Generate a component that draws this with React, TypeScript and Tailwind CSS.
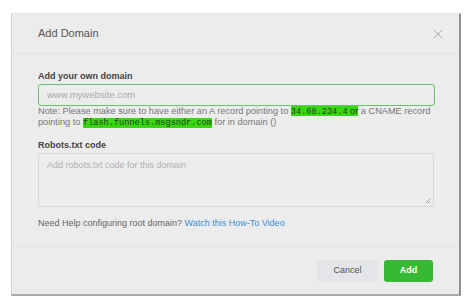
import React from "react";

export default function App() {
  return (
    <div className="w-[472px] h-[306px] bg-white pl-[11px] pt-[13px]" style={{ fontFamily: '"Liberation Sans", Arial, sans-serif' }}>
      <div className="w-[450px] h-[283px] bg-[#ececec] border-l border-l-[#d4d4d4] border-r-[2px] border-r-[#8f8f8f] border-b-[2px] border-b-[#a9a9a9] border-t border-t-[#e4e4e4] flex flex-col">
        <div className="h-[40px] shrink-0 flex items-center justify-between pl-[26px] pr-[14px] border-b border-b-[#e2e2e2]">
          <span className="text-[11px] text-[#555]">Add Domain</span>
          <svg width="10" height="10" viewBox="0 0 10 10" className="mr-[2px]">
            <path d="M1 1 L9 9 M9 1 L1 9" stroke="#aaa" strokeWidth="1" />
          </svg>
        </div>
        <div className="flex-1 pl-[26px] pr-[26px] pt-[16px]">
          <div className="text-[9px] font-bold text-[#444] leading-[12px]">Add your own domain</div>
          <div className="mt-[2px] h-[22px] w-[397px] rounded-[3px] border-[1.5px] border-[#6cc36c] flex items-center pl-[8px] text-[9.5px] text-[#aaa]">
            www.mywebsite.com
          </div>
          <div className="text-[9.2px] leading-[10px] text-[#777] w-[400px]">
            Note: Please make sure to have either an A record pointing to{" "}
            <span className="bg-[#36d80e] text-[#2d3a2d]">
              <span className="text-[8.6px]" style={{ fontFamily: '"Liberation Mono", monospace' }}>34.68.234.4</span> or
            </span>{" "}
            a CNAME record pointing to{" "}
            <span className="bg-[#36d80e] text-[#2d3a2d] text-[8.6px]" style={{ fontFamily: '"Liberation Mono", monospace' }}>
              flash.funnels.msgsndr.com
            </span>{" "}
            for in domain ()
          </div>
          <div className="mt-[11px] text-[9px] font-bold text-[#444] leading-[12px]">Robots.txt code</div>
          <div className="relative mt-[2px] h-[54px] w-[396px] rounded-[3px] border border-[#d8d8d8] pl-[8px] pt-[5px] text-[9px] text-[#b0b0b0]">
            Add robots.txt code for this domain
            <svg width="6" height="6" viewBox="0 0 6 6" className="absolute right-[2px] bottom-[2px]">
              <path d="M5 1 L1 5 M5 3 L3 5" stroke="#999" strokeWidth="0.8" />
            </svg>
          </div>
          <div className="mt-[10px] text-[9px] leading-[12px] text-[#666]">
            Need Help configuring root domain? <span className="text-[#3a8fd6]">Watch this How-To Video</span>
          </div>
        </div>
        <div className="h-[48px] shrink-0 border-t border-t-[#e2e2e2] flex items-start justify-end pt-[13px] pr-[26px] gap-[6px]">
          <div className="w-[61px] h-[22px] rounded-[3px] bg-[#e3e5e8] flex items-center justify-center text-[9px] text-[#555]">Cancel</div>
          <div className="w-[49px] h-[22px] rounded-[3px] bg-[#37b935] flex items-center justify-center text-[9px] font-bold text-white">Add</div>
        </div>
      </div>
    </div>
  );
}
